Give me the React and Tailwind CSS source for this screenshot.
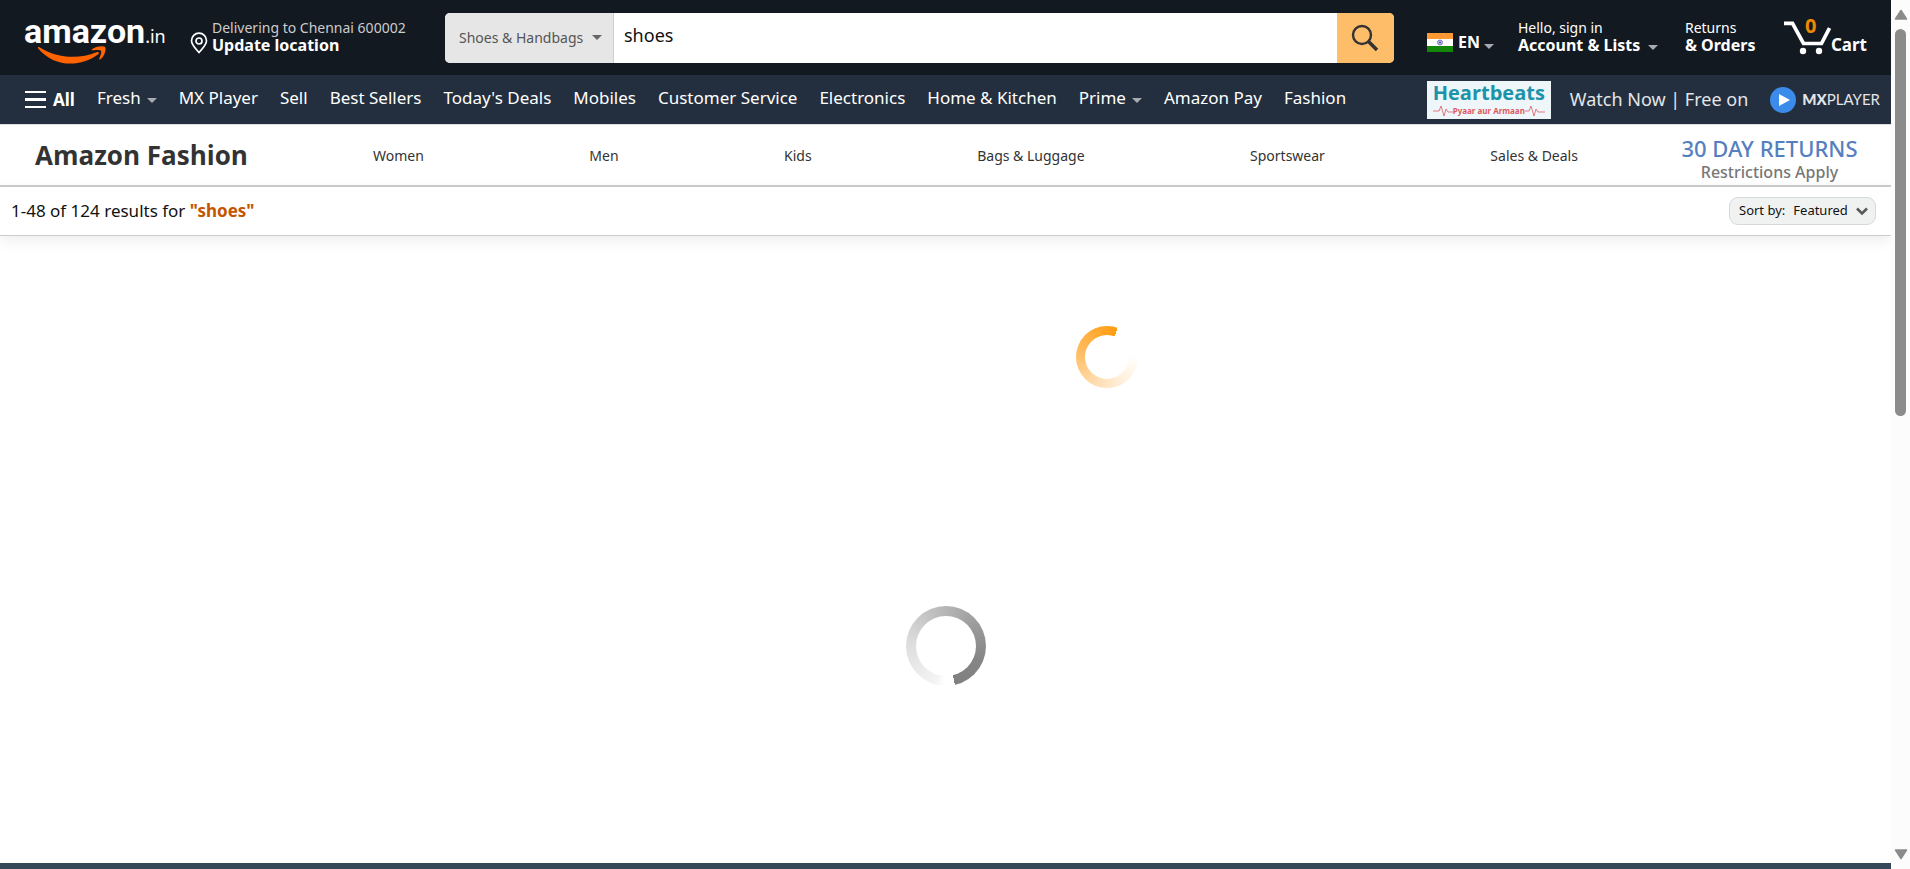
import React from "react";

const departments = [
  { label: "Fresh", menu: true },
  { label: "MX Player" },
  { label: "Sell" },
  { label: "Best Sellers" },
  { label: "Today's Deals" },
  { label: "Mobiles" },
  { label: "Customer Service" },
  { label: "Electronics" },
  { label: "Home & Kitchen" },
  { label: "Prime", menu: true },
  { label: "Amazon Pay" },
  { label: "Fashion" },
];

const fashionLinks = ["Women", "Men", "Kids", "Bags & Luggage", "Sportswear", "Sales & Deals"];

function Caret({ className }) {
  return (
    <svg viewBox="0 0 10 5" className={`h-[5px] w-[10px] shrink-0 ${className}`} aria-hidden="true">
      <path d="M0 0h10L5 5z" fill="currentColor" />
    </svg>
  );
}

function Logo() {
  return (
    <a href="#home" aria-label="Amazon.in" className="flex w-[141px] shrink-0 flex-col pt-1">
      <span className="flex items-baseline text-white">
        <span className="font-['Roboto',sans-serif] text-[34px] leading-8 font-bold">amazon</span>
        <span className="text-[18px] leading-8">.in</span>
      </span>
      <svg viewBox="0 0 70 19" className="-mt-[6px] ml-[13px] h-[19px] w-[70px]" aria-hidden="true">
        <path d="M1 2.200C.4 1.300 1.400 .4 2.500 1.200C20 12.500 42 13.500 59.500 6.200C61.500 5.300 62.800 7 61 8.400C43 21.500 17 21.500 1 2.200Z" fill="#ff6200" />
        <path d="M55 3.200C58.500 .2 67 -.6 68.200 1.200C69.500 3.200 67.500 10.500 63.500 13.300C62.600 13.900 61.900 13.500 62.300 12.600C63.500 9.700 64.800 5.800 64 4.700C63.100 3.500 58.900 4 56 4.300C54.800 4.400 54.200 3.900 55 3.200Z" fill="#ff6200" />
      </svg>
    </a>
  );
}

function TopBar() {
  return (
    <header className="flex h-[75px] items-center bg-[#131921] pr-6 pl-6 text-white">
      <Logo />
      <a href="#location" className="ml-[25px] flex w-[230px] shrink-0 items-center gap-1">
        <svg viewBox="0 0 18 22" className="mt-[10px] h-[22px] w-[18px]" fill="none" stroke="#fff" strokeWidth="1.700" aria-hidden="true">
          <path d="M9 20.500C6 17 1.500 12.800 1.500 8.700A7.500 7.500 0 0 1 16.500 8.700C16.500 12.800 12 17 9 20.500Z" />
          <circle cx="9" cy="9" r="3" />
        </svg>
        <span className="flex flex-col whitespace-nowrap">
          <span className="text-[14px] leading-4 text-[#ccc]">Delivering to Chennai 600002</span>
          <span className="text-[16px] leading-[19px] font-bold">Update location</span>
        </span>
      </a>
      <form className="ml-[25px] flex h-[50px] grow overflow-hidden rounded-[5px] bg-white" onSubmit={(e) => e.preventDefault()}>
        <div className="relative flex w-[169px] shrink-0 items-center border-r border-[#cdcdcd] bg-[#e6e6e6]">
          <select aria-label="Search in" className="h-full w-full appearance-none bg-transparent pl-[14px] text-[14px] text-[#555] outline-none">
            <option>Shoes &amp; Handbags</option>
          </select>
          <Caret className="pointer-events-none absolute right-[11px] text-[#666]" />
        </div>
        <input aria-label="Search Amazon.in" type="text" defaultValue="shoes" className="min-w-0 grow pb-1 pl-[10px] text-[18px] text-[#111] outline-none" />
        <button type="submit" aria-label="Go" className="flex w-[57px] shrink-0 items-center justify-center bg-[#febd69]">
          <svg viewBox="0 0 28 28" className="h-7 w-7" fill="none" stroke="#333" aria-hidden="true">
            <circle cx="11" cy="11" r="9" strokeWidth="2.400" />
            <path d="M17.500 17.500L26 26" strokeWidth="3.600" />
          </svg>
        </button>
      </form>
      <button type="button" className="ml-[33px] flex w-[91px] shrink-0 items-center pt-[10px]">
        <svg viewBox="0 0 26 19" className="h-[19px] w-[26px]" aria-label="India">
          <path d="M0 0h26v7H0z" fill="#ff9933" />
          <path d="M0 6h26v7H0z" fill="#fff" />
          <path d="M0 13h26v6H0z" fill="#138808" />
          <circle cx="13" cy="9.500" r="2.500" fill="#b9b9dd" stroke="#6a6ab5" strokeWidth=".8" />
          <circle cx="13" cy="9.500" r=".7" fill="#000088" />
        </svg>
        <span className="ml-[5px] text-[16px] leading-[19px] font-bold">EN</span>
        <Caret className="mt-2 ml-1 text-[#a7acb2]" />
      </button>
      <a href="#account" className="flex w-[167px] shrink-0 flex-col whitespace-nowrap">
        <span className="text-[14px] leading-4">Hello, sign in</span>
        <span className="flex items-center gap-2 text-[16px] leading-[19px] font-bold">
          Account &amp; Lists
          <Caret className="mt-1 text-[#a7acb2]" />
        </span>
      </a>
      <a href="#orders" className="flex w-[98px] shrink-0 flex-col whitespace-nowrap">
        <span className="text-[14px] leading-4">Returns</span>
        <span className="text-[16px] leading-[19px] font-bold">&amp; Orders</span>
      </a>
      <a href="#cart" className="relative flex shrink-0 items-end">
        <svg viewBox="0 0 48 34" className="h-[34px] w-[48px]" fill="none" stroke="#fff" aria-hidden="true">
          <path d="M1 2.300H9.500L20.500 22.500H38.500L46.500 7" strokeWidth="3.700" />
          <circle cx="20" cy="30" r="3.200" fill="#fff" stroke="none" />
          <circle cx="36" cy="30" r="3.200" fill="#fff" stroke="none" />
        </svg>
        <span className="absolute -top-[5px] left-[22px] text-[20px] leading-5 font-bold text-[#f08804]">0</span>
        <span className="text-[17px] leading-5 font-bold">Cart</span>
      </a>
    </header>
  );
}

function Promo() {
  return (
    <a href="#mxplayer" className="ml-auto flex shrink-0 items-center text-[#e3e5e9]">
      <span className="flex h-[38px] w-[124px] flex-col items-center bg-[#eef6fa]">
        <span className="font-['Open_Sans',sans-serif] text-[20px] leading-6 font-bold text-[#1c93a8]">Heartbeats</span>
        <span className="flex items-center text-[#e0595f]">
          <svg viewBox="0 0 20 12" className="h-3 w-5" fill="none" stroke="currentColor" strokeWidth=".8" aria-hidden="true">
            <path d="M0 6h6l2-5 3 10 2-7 2 3h5" />
          </svg>
          <span className="text-[8px] leading-3 font-bold whitespace-nowrap">Pyaar aur Armaan</span>
          <svg viewBox="0 0 20 12" className="h-3 w-5" fill="none" stroke="currentColor" strokeWidth=".8" aria-hidden="true">
            <path d="M0 6h4l2-5 3 10 2-7 2 3h7" />
          </svg>
        </span>
      </span>
      <span className="ml-[19px] text-[18px] whitespace-nowrap">Watch Now | Free on</span>
      <svg viewBox="0 0 26 26" className="ml-[22px] h-[26px] w-[26px]" aria-hidden="true">
        <circle cx="13" cy="13" r="13" fill="#3b8beb" />
        <path d="M9 7l11 6-11 6z" fill="#fff" />
      </svg>
      <span className="ml-[6px] font-['Lato',sans-serif] text-[15px]">
        <b className="font-black">MX</b>PLAYER
      </span>
    </a>
  );
}

function DepartmentBar() {
  return (
    <nav className="flex h-[49px] items-center bg-[#232f3e] pr-[11px] pl-[25px] text-[17px] whitespace-nowrap text-white">
      <button type="button" className="mr-[22px] flex items-center gap-[7px] font-bold">
        <svg viewBox="0 0 21 17" className="h-[17px] w-[21px]" fill="#fff" aria-hidden="true">
          <path d="M0 0h21v2H0zM0 7h21v3H0zM0 15h21v2H0z" />
        </svg>
        All
      </button>
      <div className="flex items-center gap-[22px] pb-[3px]">
        {departments.map((d) => (
          <a key={d.label} href={`#${d.label}`} className="flex items-center gap-[6px]">
            {d.label}
            {d.menu && <Caret className="mt-1 text-[#a7acb2]" />}
          </a>
        ))}
      </div>
      <Promo />
    </nav>
  );
}

function FashionBar() {
  return (
    <nav className="flex h-[63px] items-center border-t border-b-2 border-t-[#ddd] border-b-[#ccc] pr-[34px] pl-[35px] whitespace-nowrap">
      <a href="#fashion" className="w-[338px] shrink-0 font-['Open_Sans',sans-serif] text-[26px] font-bold text-[#333]">
        Amazon Fashion
      </a>
      <div className="flex grow items-center justify-between text-[14px] text-[#333]">
        {fashionLinks.map((label) => (
          <a key={label} href={`#${label}`}>{label}</a>
        ))}
      </div>
      <a href="#returns" className="ml-[104px] flex w-[175px] shrink-0 flex-col items-center pt-2">
        <span className="text-[22px] leading-[26px] font-medium text-[#567fc0]">30 DAY RETURNS</span>
        <span className="text-[16px] leading-[22px] font-medium text-[#777]">Restrictions Apply</span>
      </a>
    </nav>
  );
}

function ResultsBar() {
  return (
    <div className="flex h-[49px] items-center justify-between border-b border-[#ccc] pr-[15px] pl-[11px] shadow-[0_4px_14px_rgba(0,0,0,0.08)]">
      <h1 className="text-[17px] text-[#111]">
        1-48 of 124 results for <span className="font-bold text-[#c45500]">"shoes"</span>
      </h1>
      <div className="relative flex h-7 w-[147px] items-center rounded-[9px] border border-[#d5d9d9] bg-[#f0f2f2] pl-[9px] text-[13px] text-[#111]">
        <label htmlFor="sort">Sort by:</label>
        <select id="sort" className="h-full grow appearance-none bg-transparent pl-2 outline-none">
          <option>Featured</option>
        </select>
        <svg viewBox="0 0 12 9" className="pointer-events-none absolute right-[7px] h-[9px] w-3" fill="none" stroke="#565959" strokeWidth="2.600" aria-hidden="true">
          <path d="M1 1.500l5 5 5-5" />
        </svg>
      </div>
    </div>
  );
}

function Scrollbar() {
  return (
    <div aria-hidden="true" className="flex w-[19px] shrink-0 flex-col items-center bg-[#fcfcfc] py-[9px] text-[#8b8b8b]">
      <svg viewBox="0 0 14 11" className="h-[11px] w-[14px]">
        <path d="M7 1.500L12.500 10H1.500z" fill="currentColor" stroke="currentColor" strokeWidth="1.500" strokeLinejoin="round" />
      </svg>
      <div className="mt-[9px] h-5/11 w-[11px] rounded-full bg-[#8b8b8b]" />
      <svg viewBox="0 0 14 11" className="mt-auto h-[11px] w-[14px]">
        <path d="M7 9.500L12.500 1H1.500z" fill="currentColor" stroke="currentColor" strokeWidth="1.500" strokeLinejoin="round" />
      </svg>
    </div>
  );
}

export default function App() {
  return (
    <div className="flex h-screen bg-white font-['Noto_Sans',sans-serif]">
      <div className="flex min-w-0 grow flex-col">
        <TopBar />
        <DepartmentBar />
        <FashionBar />
        <ResultsBar />
        <main className="flex grow flex-col items-center">
          <div className="flex w-full justify-center pt-[90px] pl-[323px]">
            <div role="status" aria-label="Loading results" className="h-[62px] w-[62px] rounded-full bg-[conic-gradient(from_20deg,#ffffff_0%,#ffffff_18%,#fff2df_34%,#ffdcae_52%,#ffc068_70%,#ff9c0e_100%)] p-[9px]">
              <div className="h-full w-full rounded-full bg-white" />
            </div>
          </div>
          <div role="status" aria-label="Loading page" className="mt-[218px] h-20 w-20 rounded-full bg-[conic-gradient(from_167deg,#ffffff_0%,#ffffff_4%,#f4f4f4_8%,#dddddd_30%,#b8b8b8_52%,#999999_70%,#858585_85%,#808080_100%)] p-[10px]">
            <div className="h-full w-full rounded-full bg-white" />
          </div>
        </main>
        <footer className="h-[6px] bg-[#37475a]" />
      </div>
      <Scrollbar />
    </div>
  );
}
